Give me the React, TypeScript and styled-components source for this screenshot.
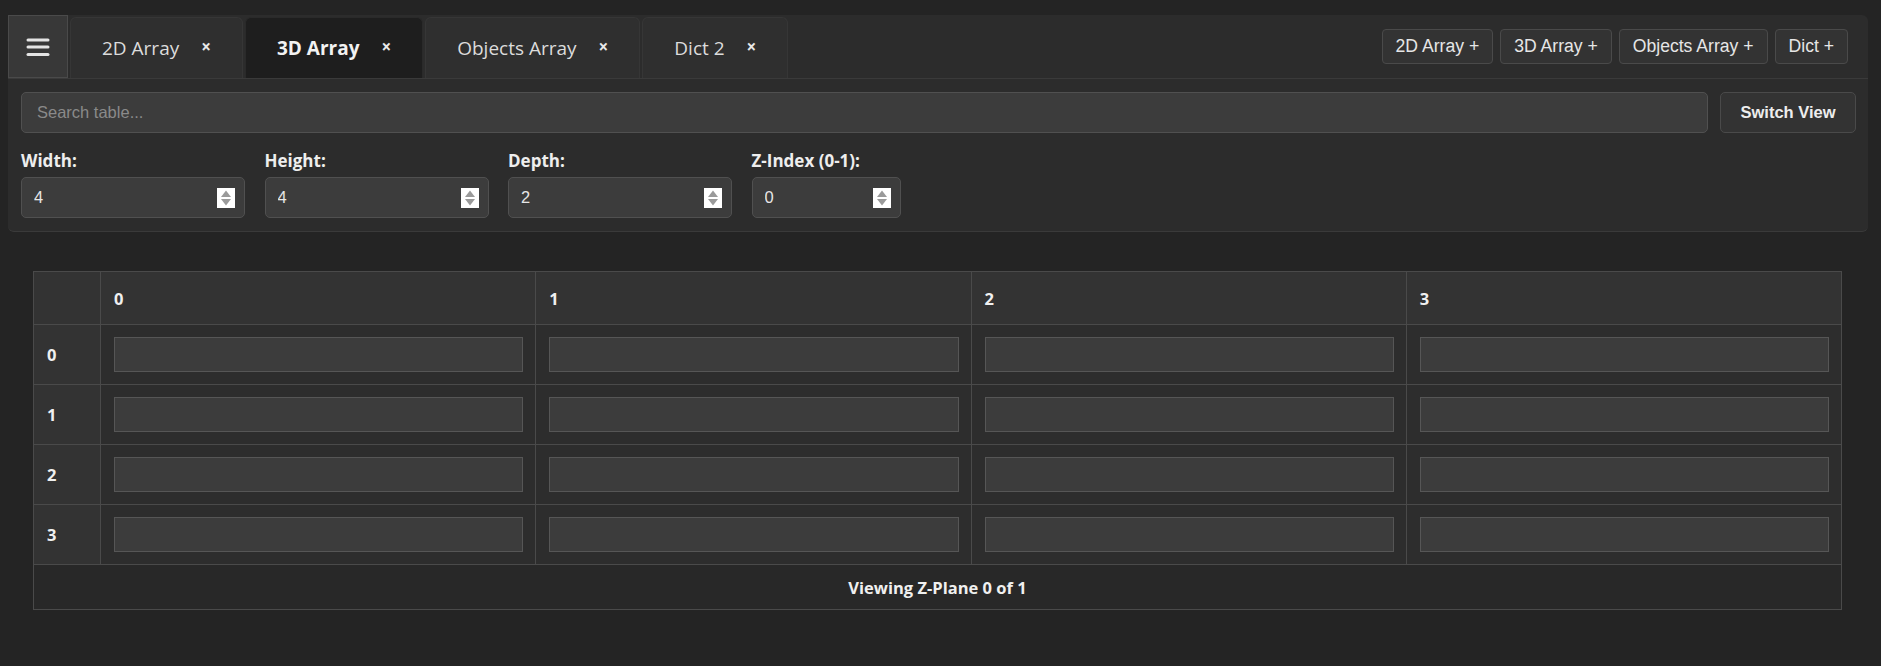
import React from "react";
import styled, { createGlobalStyle, css } from "styled-components";

const GlobalStyle = createGlobalStyle`
  html, body {
    margin: 0;
    padding: 0;
    background: #242424;
    color: #e6e6e6;
    font-family: "Open Sans", "Noto Sans", sans-serif;
  }
  * { box-sizing: border-box; }
`;

const Page = styled.div`
  padding: 15px 13px 40px 8px;
`;

const Panel = styled.div`
  background: #2c2c2c;
  border-radius: 6px;
  border-bottom: 1px solid #3a3a3a;
`;

const TabBar = styled.div`
  display: flex;
  align-items: flex-end;
  height: 64px;
  border-bottom: 1px solid #3a3a3a;
`;

const MenuButton = styled.button`
  align-self: stretch;
  width: 60px;
  background: #383838;
  border: 1px solid #4a4a4a;
  display: flex;
  align-items: center;
  justify-content: center;
  padding: 0;
  cursor: pointer;
`;

const Tabs = styled.div`
  display: flex;
  gap: 2px;
  margin-left: 2px;
  align-self: flex-end;
`;

const Tab = styled.div<{ $active?: boolean }>`
  height: 61px;
  padding: 0 31px 0 31px;
  display: flex;
  align-items: center;
  gap: 22px;
  background: #2f2f2f;
  border: 1px solid #363636;
  border-bottom: none;
  border-radius: 6px 6px 0 0;
  font-size: 19px;
  color: #dcdcdc;
  ${(p) =>
    p.$active &&
    css`
      background: #1e1e1e;
      border-color: #2a2a2a;
      font-weight: 700;
      color: #f2f2f2;
    `}
`;

const TabLabel = styled.span`
  line-height: 1;
  padding-top: 1px;
`;

const Close = styled.span`
  font-size: 17px;
  font-weight: 700;
  line-height: 1;
  color: #e8e8e8;
  margin-top: -4px;
`;

const Actions = styled.div`
  margin-left: auto;
  align-self: center;
  display: flex;
  gap: 7px;
  padding-right: 20px;
`;

const ActionButton = styled.button`
  height: 35px;
  padding: 0 13px;
  background: #333333;
  border: 1px solid #4a4a4a;
  border-radius: 4px;
  color: #e6e6e6;
  font-family: "Liberation Sans", Arial, sans-serif;
  font-size: 17.6px;
  cursor: pointer;
`;

const Controls = styled.div`
  padding: 13px 12px 13px 13px;
`;

const SearchRow = styled.div`
  display: flex;
  gap: 12px;
`;

const SearchInput = styled.input`
  flex: 1;
  height: 41px;
  background: #3c3c3c;
  border: 1px solid #505050;
  border-radius: 5px;
  padding: 0 15px;
  color: #e6e6e6;
  font-family: "Liberation Sans", Arial, sans-serif;
  font-size: 16.5px;
  outline: none;
  &::placeholder { color: #8a8a8a; }
`;

const SwitchButton = styled.button`
  width: 136px;
  height: 41px;
  background: #333333;
  border: 1px solid #4a4a4a;
  border-radius: 5px;
  color: #ededed;
  font-family: "Liberation Sans", Arial, sans-serif;
  font-size: 16.5px;
  font-weight: 700;
  cursor: pointer;
`;

const Fields = styled.div`
  display: flex;
  gap: 19.5px;
  margin-top: 18px;
`;

const Field = styled.div`
  display: flex;
  flex-direction: column;
  gap: 6px;
`;

const Label = styled.label`
  font-weight: 700;
  font-size: 17px;
  line-height: 20px;
  color: #eeeeee;
`;

const NumberWrap = styled.div<{ $w: number }>`
  position: relative;
  width: ${(p) => p.$w}px;
`;

const NumberInput = styled.input`
  width: 100%;
  height: 41px;
  background: #3c3c3c;
  border: 1px solid #505050;
  border-radius: 5px;
  padding: 0 12px;
  color: #e6e6e6;
  font-family: "Liberation Sans", Arial, sans-serif;
  font-size: 16.5px;
  outline: none;
  appearance: textfield;
  -moz-appearance: textfield;
  &::-webkit-inner-spin-button,
  &::-webkit-outer-spin-button {
    -webkit-appearance: none;
    margin: 0;
  }
`;

const Spinner = styled.span`
  position: absolute;
  right: 10px;
  top: 50%;
  transform: translateY(-50%);
  width: 18px;
  height: 20px;
  background: #ffffff;
  display: flex;
  align-items: center;
  justify-content: center;
`;

const TableSection = styled.div`
  margin: 39px 26px 0 25px;
`;

const Grid = styled.table`
  width: 100%;
  border-collapse: collapse;
  table-layout: fixed;
  font-size: 16.5px;
`;

const HeadCell = styled.th`
  height: 53px;
  background: #333333;
  border: 1px solid #4a4a4a;
  text-align: left;
  padding: 0 13px;
  font-weight: 700;
  color: #f0f0f0;
`;

const RowHead = styled.td`
  height: 60px;
  background: #333333;
  border: 1px solid #4a4a4a;
  padding: 0 13px;
  font-weight: 700;
  color: #f0f0f0;
`;

const Cell = styled.td`
  height: 60px;
  background: #2d2d2d;
  border: 1px solid #4a4a4a;
  padding: 0 12px 0 13px;
`;

const CellInput = styled.input`
  display: block;
  width: 100%;
  height: 35px;
  background: #3c3c3c;
  border: 1px solid #565656;
  color: #e6e6e6;
  outline: none;
  font-size: 15px;
`;

const FootCell = styled.td`
  height: 45px;
  background: #282828;
  border: 1px solid #4a4a4a;
  text-align: center;
  font-weight: 700;
  color: #f0f0f0;
`;

const Hamburger = () => (
  <svg width="24" height="20" viewBox="0 0 24 20">
    <g stroke="#e4e4e4" strokeWidth="3" strokeLinecap="round">
      <line x1="2" y1="3" x2="22" y2="3" />
      <line x1="2" y1="10" x2="22" y2="10" />
      <line x1="2" y1="17.5" x2="22" y2="17.5" />
    </g>
  </svg>
);

const SpinArrows = () => (
  <svg width="12" height="18" viewBox="0 0 12 18">
    <path d="M6 1.5 L11 8 L1 8 Z" fill="#9a9a9a" strokeLinejoin="round" />
    <path d="M1 10 L11 10 L6 16.5 Z" fill="#9a9a9a" />
  </svg>
);

const tabs = [
  { name: "2D Array" },
  { name: "3D Array", active: true },
  { name: "Objects Array" },
  { name: "Dict 2" },
];

const actions = ["2D Array +", "3D Array +", "Objects Array +", "Dict +"];

const fields = [
  { label: "Width:", value: "4", w: 224 },
  { label: "Height:", value: "4", w: 224 },
  { label: "Depth:", value: "2", w: 224 },
  { label: "Z-Index (0-1):", value: "0", w: 149 },
];

const cols = [0, 1, 2, 3];
const rows = [0, 1, 2, 3];

export default function App() {
  return (
    <>
      <GlobalStyle />
      <Page>
        <Panel>
          <TabBar>
            <MenuButton aria-label="Menu">
              <Hamburger />
            </MenuButton>
            <Tabs>
              {tabs.map((t) => (
                <Tab key={t.name} $active={t.active}>
                  <TabLabel>{t.name}</TabLabel>
                  <Close>×</Close>
                </Tab>
              ))}
            </Tabs>
            <Actions>
              {actions.map((a) => (
                <ActionButton key={a}>{a}</ActionButton>
              ))}
            </Actions>
          </TabBar>
          <Controls>
            <SearchRow>
              <SearchInput placeholder="Search table..." />
              <SwitchButton>Switch View</SwitchButton>
            </SearchRow>
            <Fields>
              {fields.map((f) => (
                <Field key={f.label}>
                  <Label>{f.label}</Label>
                  <NumberWrap $w={f.w}>
                    <NumberInput type="number" defaultValue={f.value} />
                    <Spinner>
                      <SpinArrows />
                    </Spinner>
                  </NumberWrap>
                </Field>
              ))}
            </Fields>
          </Controls>
        </Panel>
        <TableSection>
          <Grid>
            <colgroup>
              <col style={{ width: 67 }} />
              {cols.map((c) => (
                <col key={c} />
              ))}
            </colgroup>
            <thead>
              <tr>
                <HeadCell />
                {cols.map((c) => (
                  <HeadCell key={c}>{c}</HeadCell>
                ))}
              </tr>
            </thead>
            <tbody>
              {rows.map((r) => (
                <tr key={r}>
                  <RowHead>{r}</RowHead>
                  {cols.map((c) => (
                    <Cell key={c}>
                      <CellInput />
                    </Cell>
                  ))}
                </tr>
              ))}
            </tbody>
            <tfoot>
              <tr>
                <FootCell colSpan={5}>Viewing Z-Plane 0 of 1</FootCell>
              </tr>
            </tfoot>
          </Grid>
        </TableSection>
      </Page>
    </>
  );
}
